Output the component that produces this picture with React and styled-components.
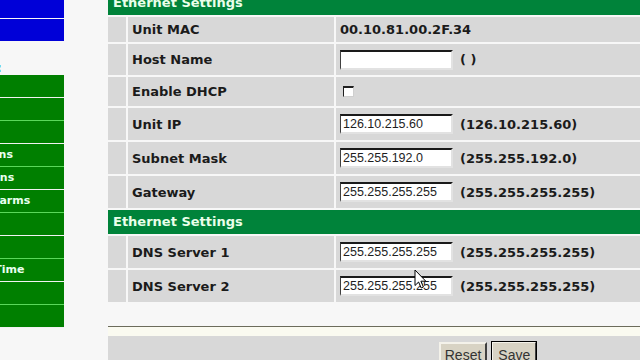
import styled, { createGlobalStyle } from "styled-components";

const GlobalStyle = createGlobalStyle`
  html, body {
    margin: 0;
    padding: 0;
    background: #f7f7f7;
    overflow: hidden;
  }
  body {
    font-family: "DejaVu Sans", Verdana, sans-serif;
  }
`;

const Page = styled.div`
  position: relative;
  display: flex;
  width: 867px;
  height: 360px;
`;

const Sidebar = styled.aside`
  flex: none;
  width: 64px;
  overflow: hidden;
`;

const SidePanel = styled.div`
  width: 126px;
  margin-left: -62px;
`;

const BlueBox = styled.div`
  height: ${(p) => p.$h}px;
  background: #0000d8;
  margin-bottom: 1px;
`;

const MenuTitle = styled.div`
  height: 33px;
  box-sizing: border-box;
  padding: 19px 0 0 2px;
  font-size: 12px;
  font-weight: bold;
  line-height: 14px;
  color: #0a8a8a;
  white-space: nowrap;
`;

const NavList = styled.ul`
  list-style: none;
  margin: 0;
  padding: 0;
  background: #007f00;
`;

const NavItem = styled.li`
  height: 22px;
  line-height: 22px;
  font-size: 11px;
  font-weight: bold;
  color: #e8fff0;
  white-space: nowrap;
  border-bottom: 1px solid #f2f2f2;

  &:nth-child(even) {
    border-bottom-color: #5ad85a;
  }
`;

const Main = styled.main`
  flex: 1;
  margin: -9px 0 0 44px;
  display: flex;
  flex-direction: column;
`;

const Table = styled.div`
  flex: none;
  display: flex;
  flex-direction: column;
  gap: 2px;
`;

const SectionHead = styled.div`
  height: 24px;
  line-height: 24px;
  padding-left: 5px;
  background: #00833a;
  color: #eaffea;
  font-size: 13px;
  font-weight: bold;
`;

const Row = styled.div`
  display: grid;
  grid-template-columns: 18px 206px 1fr;
  column-gap: 2px;
  height: ${(p) => p.$h}px;
`;

const Cell = styled.div`
  display: flex;
  align-items: center;
  gap: 7px;
  padding-left: 4px;
  background: #d8d8d8;
  font-size: 13px;
  font-weight: bold;
  color: #1b1b1b;
  white-space: nowrap;
`;

const TextInput = styled.input`
  box-sizing: border-box;
  width: 113px;
  height: 20px;
  margin: 0;
  padding: 0 2px;
  border: 2px solid;
  border-color: #1a1a1a #e2e2e2 #e2e2e2 #404040;
  border-left-width: 1px;
  background: #fff;
  font-family: "Liberation Sans", Arial, sans-serif;
  font-size: 12.5px;
  color: #1e1e1e;
  outline: none;
`;

const CheckBox = styled.input`
  appearance: none;
  box-sizing: border-box;
  width: 11px;
  height: 11px;
  margin: 0 0 0 3px;
  border: 1px solid;
  border-color: #202020 #cfcfcf #cfcfcf #202020;
  border-top-width: 2px;
  background: #fff;
`;

const Spacer = styled.div`
  flex: none;
  height: 24px;
`;

const Rule = styled.div`
  flex: none;
  height: 9px;
  border-top: 1px solid #6c6c5c;
  background: #fafaf0;
`;

const ButtonBar = styled.div`
  flex: 1;
  min-height: 0;
  display: flex;
  justify-content: center;
  align-items: flex-start;
  gap: 5px;
  padding-top: 6px;
  background: #d8d8d8;
`;

const Button = styled.button`
  flex: none;
  height: 26px;
  margin: 0;
  padding: 0 ${(p) => (p.$primary ? 5 : 4)}px;
  background: #d8d3c4;
  border: 2px solid;
  border-color: #f4f2ea #404040 #404040 #f4f2ea;
  ${(p) =>
    p.$primary &&
    `
    border-width: 1px;
    outline: 1px solid #000;
    outline-offset: 0;
  `}
  font-family: "Liberation Sans", Arial, sans-serif;
  font-size: 14px;
  color: #333;
`;

const Cursor = styled.svg`
  position: absolute;
  left: 414px;
  top: 269px;
`;

const navItems = [
  "Home",
  "Status",
  "Sensors",
  "Permissions",
  "Connections",
  "Modem Alarms",
  "Outputs",
  "Email",
  "Network Time",
  "Logs",
  "Logout",
];

const ipRows = [
  { label: "Unit IP", value: "126.10.215.60" },
  { label: "Subnet Mask", value: "255.255.192.0" },
  { label: "Gateway", value: "255.255.255.255" },
];

const dnsRows = [
  { label: "DNS Server 1", value: "255.255.255.255" },
  { label: "DNS Server 2", value: "255.255.255.255" },
];

const InputRow = ({ label, value }) => (
  <Row $h={32}>
    <Cell />
    <Cell>{label}</Cell>
    <Cell>
      <TextInput defaultValue={value} />
      <span>({value})</span>
    </Cell>
  </Row>
);

export default function App() {
  return (
    <>
      <GlobalStyle />
      <Page>
        <Sidebar>
          <SidePanel>
            <BlueBox $h={18} />
            <BlueBox $h={22} />
            <MenuTitle>Settings:</MenuTitle>
            <NavList>
              {navItems.map((item) => (
                <NavItem key={item}>{item}</NavItem>
              ))}
            </NavList>
          </SidePanel>
        </Sidebar>

        <Main>
          <Table>
            <SectionHead>Ethernet Settings</SectionHead>
            <Row $h={25}>
              <Cell />
              <Cell>Unit MAC</Cell>
              <Cell>00.10.81.00.2F.34</Cell>
            </Row>
            <Row $h={31}>
              <Cell />
              <Cell>Host Name</Cell>
              <Cell>
                <TextInput defaultValue="" />
                <span>( )</span>
              </Cell>
            </Row>
            <Row $h={29}>
              <Cell />
              <Cell>Enable DHCP</Cell>
              <Cell>
                <CheckBox type="checkbox" />
              </Cell>
            </Row>
            {ipRows.map((r) => (
              <InputRow key={r.label} {...r} />
            ))}
            <SectionHead>Ethernet Settings</SectionHead>
            {dnsRows.map((r) => (
              <InputRow key={r.label} {...r} />
            ))}
          </Table>
          <Spacer />
          <Rule />
          <ButtonBar>
            <Button>Reset</Button>
            <Button $primary>Save</Button>
          </ButtonBar>
        </Main>

        <Cursor width="13" height="21" viewBox="0 0 13 21">
          <path
            d="M1 1 L1 16.5 L4.6 13 L7.2 19 L9.4 18 L6.9 12.2 L11.8 12.2 Z"
            fill="#fff"
            stroke="#000"
            strokeWidth="1"
            strokeLinejoin="round"
          />
        </Cursor>
      </Page>
    </>
  );
}
